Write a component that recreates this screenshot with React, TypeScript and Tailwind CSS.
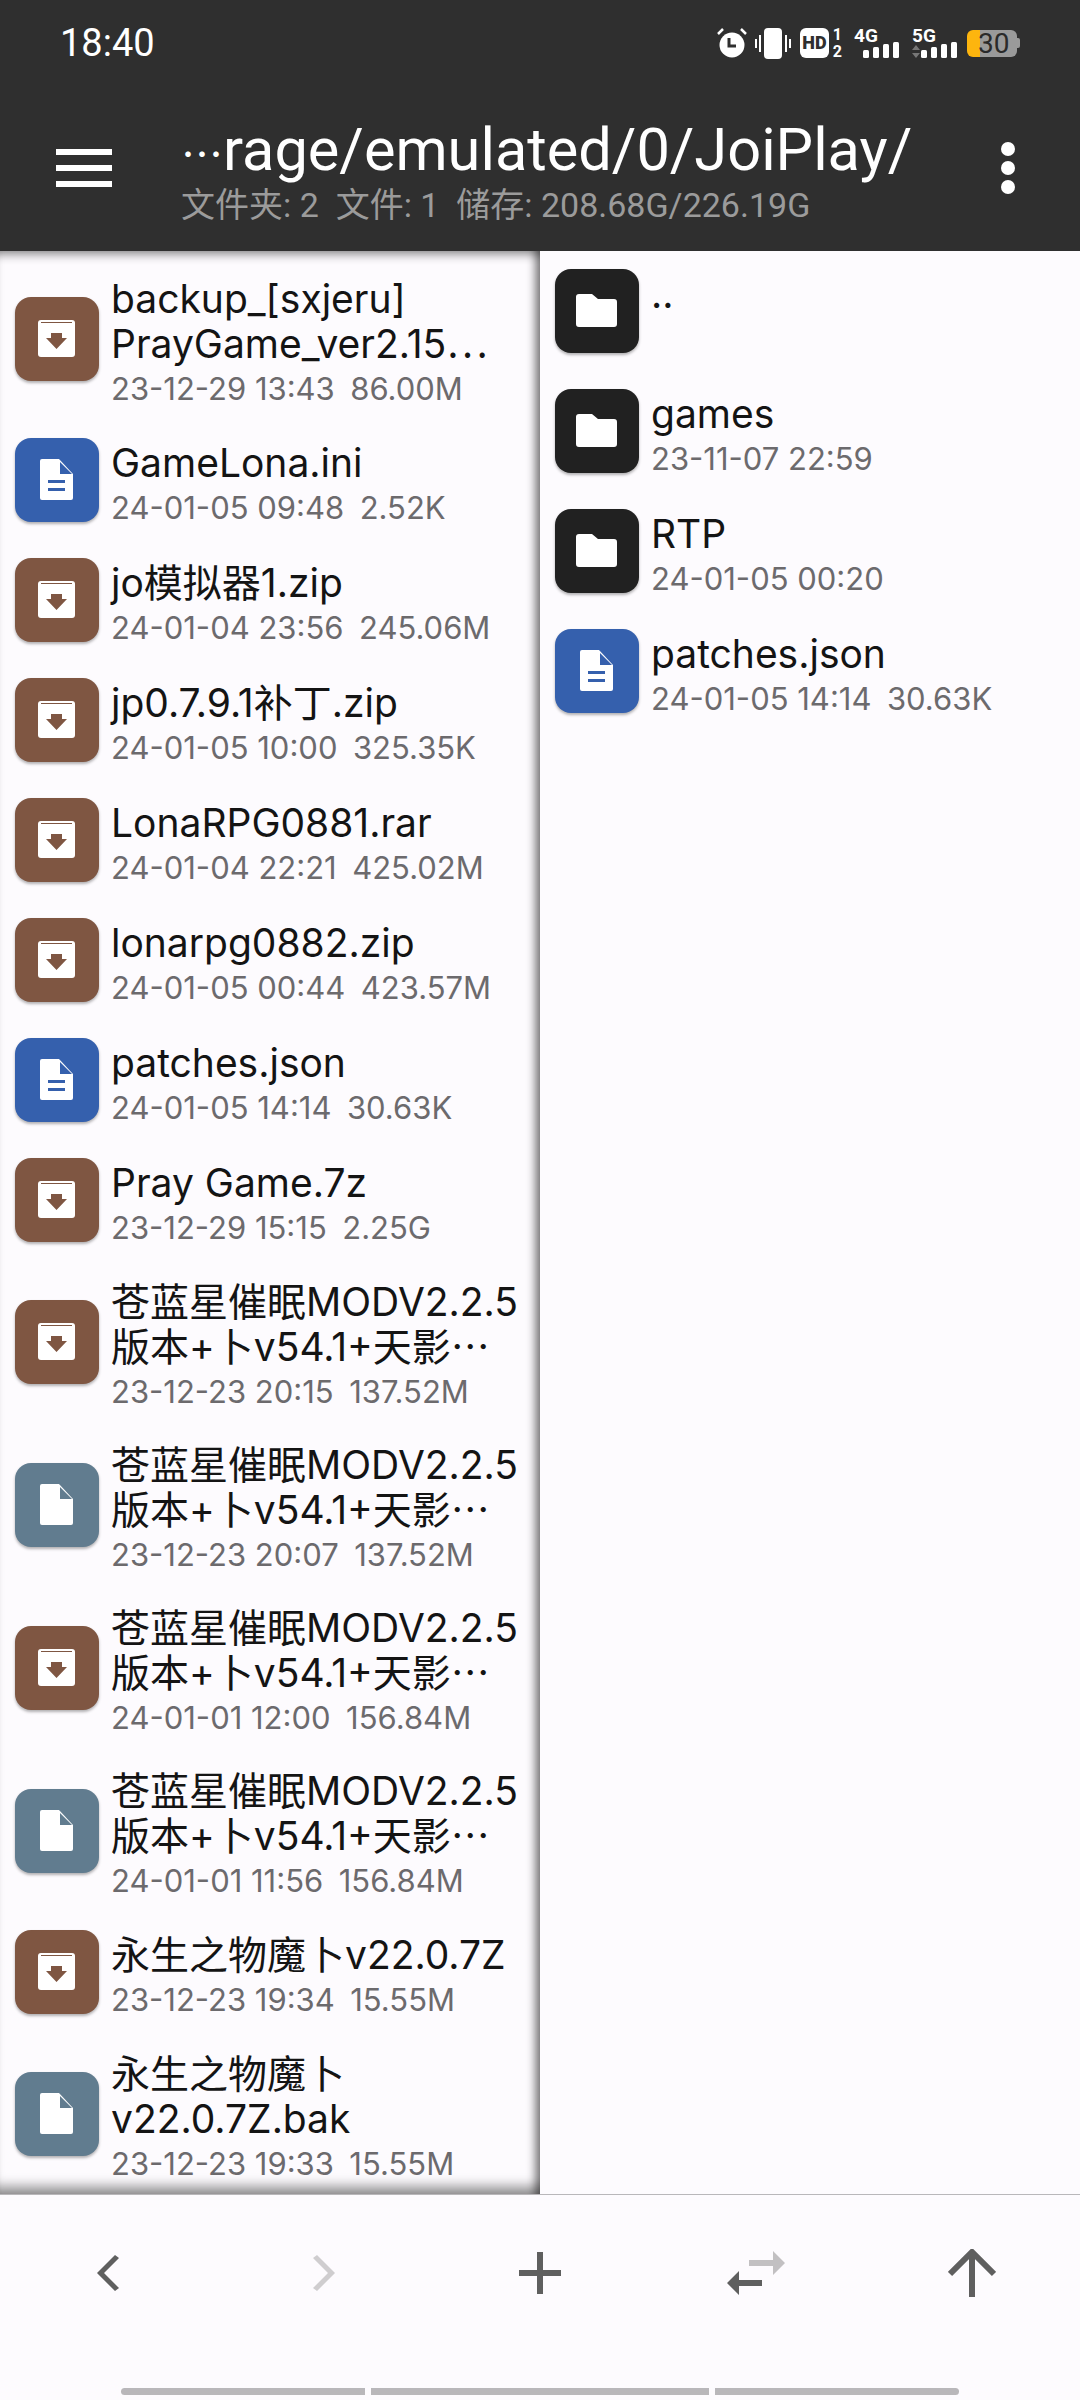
import type { ReactNode } from 'react'

type Kind = 'archive' | 'doc' | 'file' | 'folder'

type Entry = {
  kind: Kind
  title: string[]
  meta: string
}

const TILE_BG: Record<Kind, string> = {
  archive: 'bg-[#7f5642]',
  doc: 'bg-[#3560ad]',
  file: 'bg-[#617c8f]',
  folder: 'bg-[#212121]',
}

const TILE_INK: Record<Kind, string> = {
  archive: '#7f5642',
  doc: '#3560ad',
  file: '#617c8f',
  folder: '#212121',
}

const LONG_NAME = '苍蓝星催眠MODV2.2.5'
const LONG_TAIL = '版本+卜v54.1+天影⋯'

// date and size are separated by an en space, the gap is wider than a normal space
const leftEntries: Entry[] = [
  { kind: 'archive', title: ['backup_[sxjeru]', 'PrayGame_ver2.15⋯'], meta: '23-12-29 13:43\u200286.00M' },
  { kind: 'doc', title: ['GameLona.ini'], meta: '24-01-05 09:48\u20022.52K' },
  { kind: 'archive', title: ['jo模拟器1.zip'], meta: '24-01-04 23:56\u2002245.06M' },
  { kind: 'archive', title: ['jp0.7.9.1补丁.zip'], meta: '24-01-05 10:00\u2002325.35K' },
  { kind: 'archive', title: ['LonaRPG0881.rar'], meta: '24-01-04 22:21\u2002425.02M' },
  { kind: 'archive', title: ['lonarpg0882.zip'], meta: '24-01-05 00:44\u2002423.57M' },
  { kind: 'doc', title: ['patches.json'], meta: '24-01-05 14:14\u200230.63K' },
  { kind: 'archive', title: ['Pray Game.7z'], meta: '23-12-29 15:15\u20022.25G' },
  { kind: 'archive', title: [LONG_NAME, LONG_TAIL], meta: '23-12-23 20:15\u2002137.52M' },
  { kind: 'file', title: [LONG_NAME, LONG_TAIL], meta: '23-12-23 20:07\u2002137.52M' },
  { kind: 'archive', title: [LONG_NAME, LONG_TAIL], meta: '24-01-01 12:00\u2002156.84M' },
  { kind: 'file', title: [LONG_NAME, LONG_TAIL], meta: '24-01-01 11:56\u2002156.84M' },
  { kind: 'archive', title: ['永生之物魔卜v22.0.7Z'], meta: '23-12-23 19:34\u200215.55M' },
  { kind: 'file', title: ['永生之物魔卜', 'v22.0.7Z.bak'], meta: '23-12-23 19:33\u200215.55M' },
]

const rightEntries: Entry[] = [
  { kind: 'folder', title: ['..'], meta: '' },
  { kind: 'folder', title: ['games'], meta: '23-11-07 22:59' },
  { kind: 'folder', title: ['RTP'], meta: '24-01-05 00:20' },
  { kind: 'doc', title: ['patches.json'], meta: '24-01-05 14:14\u200230.63K' },
]

function TileGlyph({ kind }: { kind: Kind }) {
  const ink = TILE_INK[kind]
  if (kind === 'folder') {
    return (
      <svg width="84" height="84" viewBox="0 0 84 84">
        <path d="M24 25h13l6 5h16a3 3 0 0 1 3 3v22a3 3 0 0 1-3 3H24a3 3 0 0 1-3-3V28a3 3 0 0 1 3-3z" fill="#fff" />
      </svg>
    )
  }
  if (kind === 'archive') {
    return (
      <svg width="84" height="84" viewBox="0 0 84 84">
        <path d="M26 23h31a3 3 0 0 1 3 3v31a3 3 0 0 1-3 3H26a3 3 0 0 1-3-3V26a3 3 0 0 1 3-3z" fill="#fff" />
        <rect x="26" y="25" width="31" height="1" fill={ink} />
        <path d="M36 36h11v5h5L41.500 52 31 41h5z" fill={ink} />
      </svg>
    )
  }
  return (
    <svg width="84" height="84" viewBox="0 0 84 84">
      <path d="M27 21h17l14 15v24a2 2 0 0 1-2 2H27a2 2 0 0 1-2-2V23a2 2 0 0 1 2-2z" fill="#fff" />
      <path d="M45 24l12 12H45z" fill={ink} />
      {kind === 'doc' && (
        <>
          <rect x="33" y="42" width="17" height="3" fill={ink} />
          <rect x="33" y="50" width="17" height="3" fill={ink} />
        </>
      )}
    </svg>
  )
}

function FileRow({ entry }: { entry: Entry }) {
  const tall = entry.title.length > 1
  return (
    <div className={`flex items-center pl-[15px] ${tall ? 'h-[163px]' : 'h-[120px]'}`}>
      <div className={`h-[84px] w-[84px] shrink-0 rounded-[16px] shadow-[0_2px_3px_rgba(0,0,0,0.3)] ${TILE_BG[entry.kind]}`}>
        <TileGlyph kind={entry.kind} />
      </div>
      <div className="ml-[12px] min-w-0 pt-[10px] font-['Inter','Noto_Sans_CJK_SC',sans-serif]">
        {entry.title.map((line, i) => (
          <div key={i} className="whitespace-nowrap text-[39px] leading-[45px] text-[#141414]">
            {line}
          </div>
        ))}
        <div className="h-[45px] whitespace-pre text-[31px] leading-[45px] text-[#6c6a6d]">{entry.meta}</div>
      </div>
    </div>
  )
}

function SignalBars({ label }: { label: string }) {
  return (
    <div className="relative h-[30px] w-[45px]">
      <span className="absolute left-0 top-[-2px] text-[19px] font-bold leading-[19px] text-white">{label}</span>
      <svg className="absolute bottom-0 right-0" width="36" height="16" viewBox="0 0 36 16">
        <rect x="0" y="8" width="6" height="8" rx="1.500" fill="#fff" />
        <rect x="10" y="5" width="6" height="11" rx="1.500" fill="#fff" />
        <rect x="20" y="2" width="6" height="14" rx="1.500" fill="#fff" />
        <rect x="30" y="0" width="6" height="16" rx="1.500" fill="#fff" />
      </svg>
    </div>
  )
}

function StatusIcons() {
  return (
    <div className="flex items-center">
      {/* alarm */}
      <svg width="32" height="32" viewBox="0 0 32 32">
        <circle cx="16" cy="18" r="12.500" fill="#fff" />
        <path d="M12 12v8h7" fill="none" stroke="#2f2f2f" strokeWidth="3" transform="translate(1 -1)" />
        <path d="M2 7l5-5M30 7l-5-5" stroke="#fff" strokeWidth="2.500" />
      </svg>
      {/* vibrate */}
      <svg className="ml-[7px]" width="36" height="31" viewBox="0 0 36 31">
        <rect x="9" y="0" width="18" height="31" rx="4" fill="#fff" />
        <path d="M1 11v9M5 7v17M31 7v17M35 11v9" stroke="#fff" strokeWidth="2" />
      </svg>
      {/* HD sim */}
      <div className="relative ml-[9px] h-[30px] w-[42px]">
        <div className="flex h-[30px] w-[29px] items-center justify-center rounded-[6px] bg-white text-[18px] font-black leading-none text-[#2f2f2f]">
          HD
        </div>
        <span className="absolute right-0 top-[-2px] text-[16px] font-bold leading-[17px] text-white">1</span>
        <span className="absolute bottom-[-2px] right-0 text-[16px] font-bold leading-[17px] text-white">2</span>
      </div>
      {/* 4G */}
      <div className="ml-[12px]">
        <SignalBars label="4G" />
      </div>
      {/* 5G */}
      <div className="relative ml-[13px]">
        <SignalBars label="5G" />
        <svg className="absolute bottom-0 left-0" width="8" height="13" viewBox="0 0 8 13">
          <path d="M0 5l4-5 4 5zM0 8h8l-4 5z" fill="#777" />
        </svg>
      </div>
      {/* battery */}
      <div className="ml-[10px] flex items-center">
        <div className="h-[27px] w-[50px] rounded-[6px] bg-[linear-gradient(90deg,#fdb50e_26%,#9a9a9a_26%)] pl-[11px] text-[28px] leading-[27px] text-[#2a2a2a]">
          30
        </div>
        <div className="h-[10px] w-[3px] rounded-r-[2px] bg-[#9a9a9a]" />
      </div>
    </div>
  )
}

function BarButton({ children }: { children: ReactNode }) {
  return <div className="flex items-center justify-center">{children}</div>
}

export default function App() {
  return (
    <div className="flex h-[2400px] w-[1080px] flex-col overflow-hidden bg-[#fdfbfe] font-['Roboto','Noto_Sans_CJK_SC',sans-serif]">
      <header className="h-[251px] shrink-0 bg-[#2f2f2f]">
        <div className="flex h-[86px] items-center justify-between pl-[60px] pr-[60px]">
          <span className="text-[38px] leading-none text-white">18:40</span>
          <StatusIcons />
        </div>
        <div className="flex h-[165px] items-center pb-[2px]">
          <div className="ml-[56px] flex w-[56px] flex-col gap-[10px]">
            <div className="h-[6px] bg-white" />
            <div className="h-[6px] bg-white" />
            <div className="h-[6px] bg-white" />
          </div>
          <div className="ml-[69px] flex-1">
            <div className="mt-[6px] flex items-baseline whitespace-nowrap text-[59.500px] leading-[66px] text-white">
              <span className="text-[42px]">⋯</span>
              <span>rage/emulated/0/JoiPlay/</span>
            </div>
            <div className="mt-[-3px] whitespace-pre text-[34px] leading-[38px] text-[#9b9b9b]">文件夹: 2  文件: 1  储存: 208.68G/226.19G</div>
          </div>
          <div className="mr-[65px] flex flex-col gap-[5px]">
            <div className="h-[14px] w-[14px] rounded-full bg-white" />
            <div className="h-[14px] w-[14px] rounded-full bg-white" />
            <div className="h-[14px] w-[14px] rounded-full bg-white" />
          </div>
        </div>
      </header>

      <main className="flex h-[1944px] shrink-0 border-b border-[#b9b7ba]">
        <section className="h-full w-[540px] overflow-hidden pt-[6px] shadow-[inset_-10px_0_8px_-5px_rgba(0,0,0,0.5),inset_0_12px_10px_-8px_rgba(0,0,0,0.4),inset_0_-16px_12px_-8px_rgba(0,0,0,0.4)]">
          {leftEntries.map((entry, i) => (
            <FileRow key={i} entry={entry} />
          ))}
        </section>
        <section className="h-full flex-1">
          {rightEntries.map((entry, i) => (
            <FileRow key={i} entry={entry} />
          ))}
        </section>
      </main>

      <footer className="flex flex-1 flex-col">
        <div className="grid h-[155px] grid-cols-5">
          <BarButton>
            <svg width="22" height="36" viewBox="0 0 22 36">
              <path d="M18 0l4 3-15 15 15 15-4 3L0 18z" fill="#5f5f5f" />
            </svg>
          </BarButton>
          <BarButton>
            <svg width="22" height="36" viewBox="0 0 22 36">
              <path d="M4 0L0 3l15 15L0 33l4 3 18-18z" fill="#cfcdcf" />
            </svg>
          </BarButton>
          <BarButton>
            <svg width="42" height="42" viewBox="0 0 42 42">
              <path d="M18 0h6v18h18v6H24v18h-6V24H0v-6h18z" fill="#5f5f5f" />
            </svg>
          </BarButton>
          <BarButton>
            <svg width="58" height="44" viewBox="0 0 58 44">
              <path d="M22 9h24V0l12 12-12 12v-9H22z" fill="#c2c0c2" />
              <path d="M35 29H12v-9L0 32l12 12v-9h23z" fill="#5f5f5f" />
            </svg>
          </BarButton>
          <BarButton>
            <svg width="48" height="48" viewBox="0 0 48 48">
              <path d="M24 3v45M2 25L24 3l22 22" fill="none" stroke="#5f5f5f" strokeWidth="6" />
            </svg>
          </BarButton>
        </div>
        <div className="mt-[38px] flex gap-[6px] px-[121px]">
          <div className="h-[7px] w-[244px] rounded-l-full bg-[#b9b7ba]" />
          <div className="h-[7px] w-[338px] bg-[#b9b7ba]" />
          <div className="h-[7px] flex-1 rounded-r-full bg-[#b9b7ba]" />
        </div>
      </footer>
    </div>
  )
}
